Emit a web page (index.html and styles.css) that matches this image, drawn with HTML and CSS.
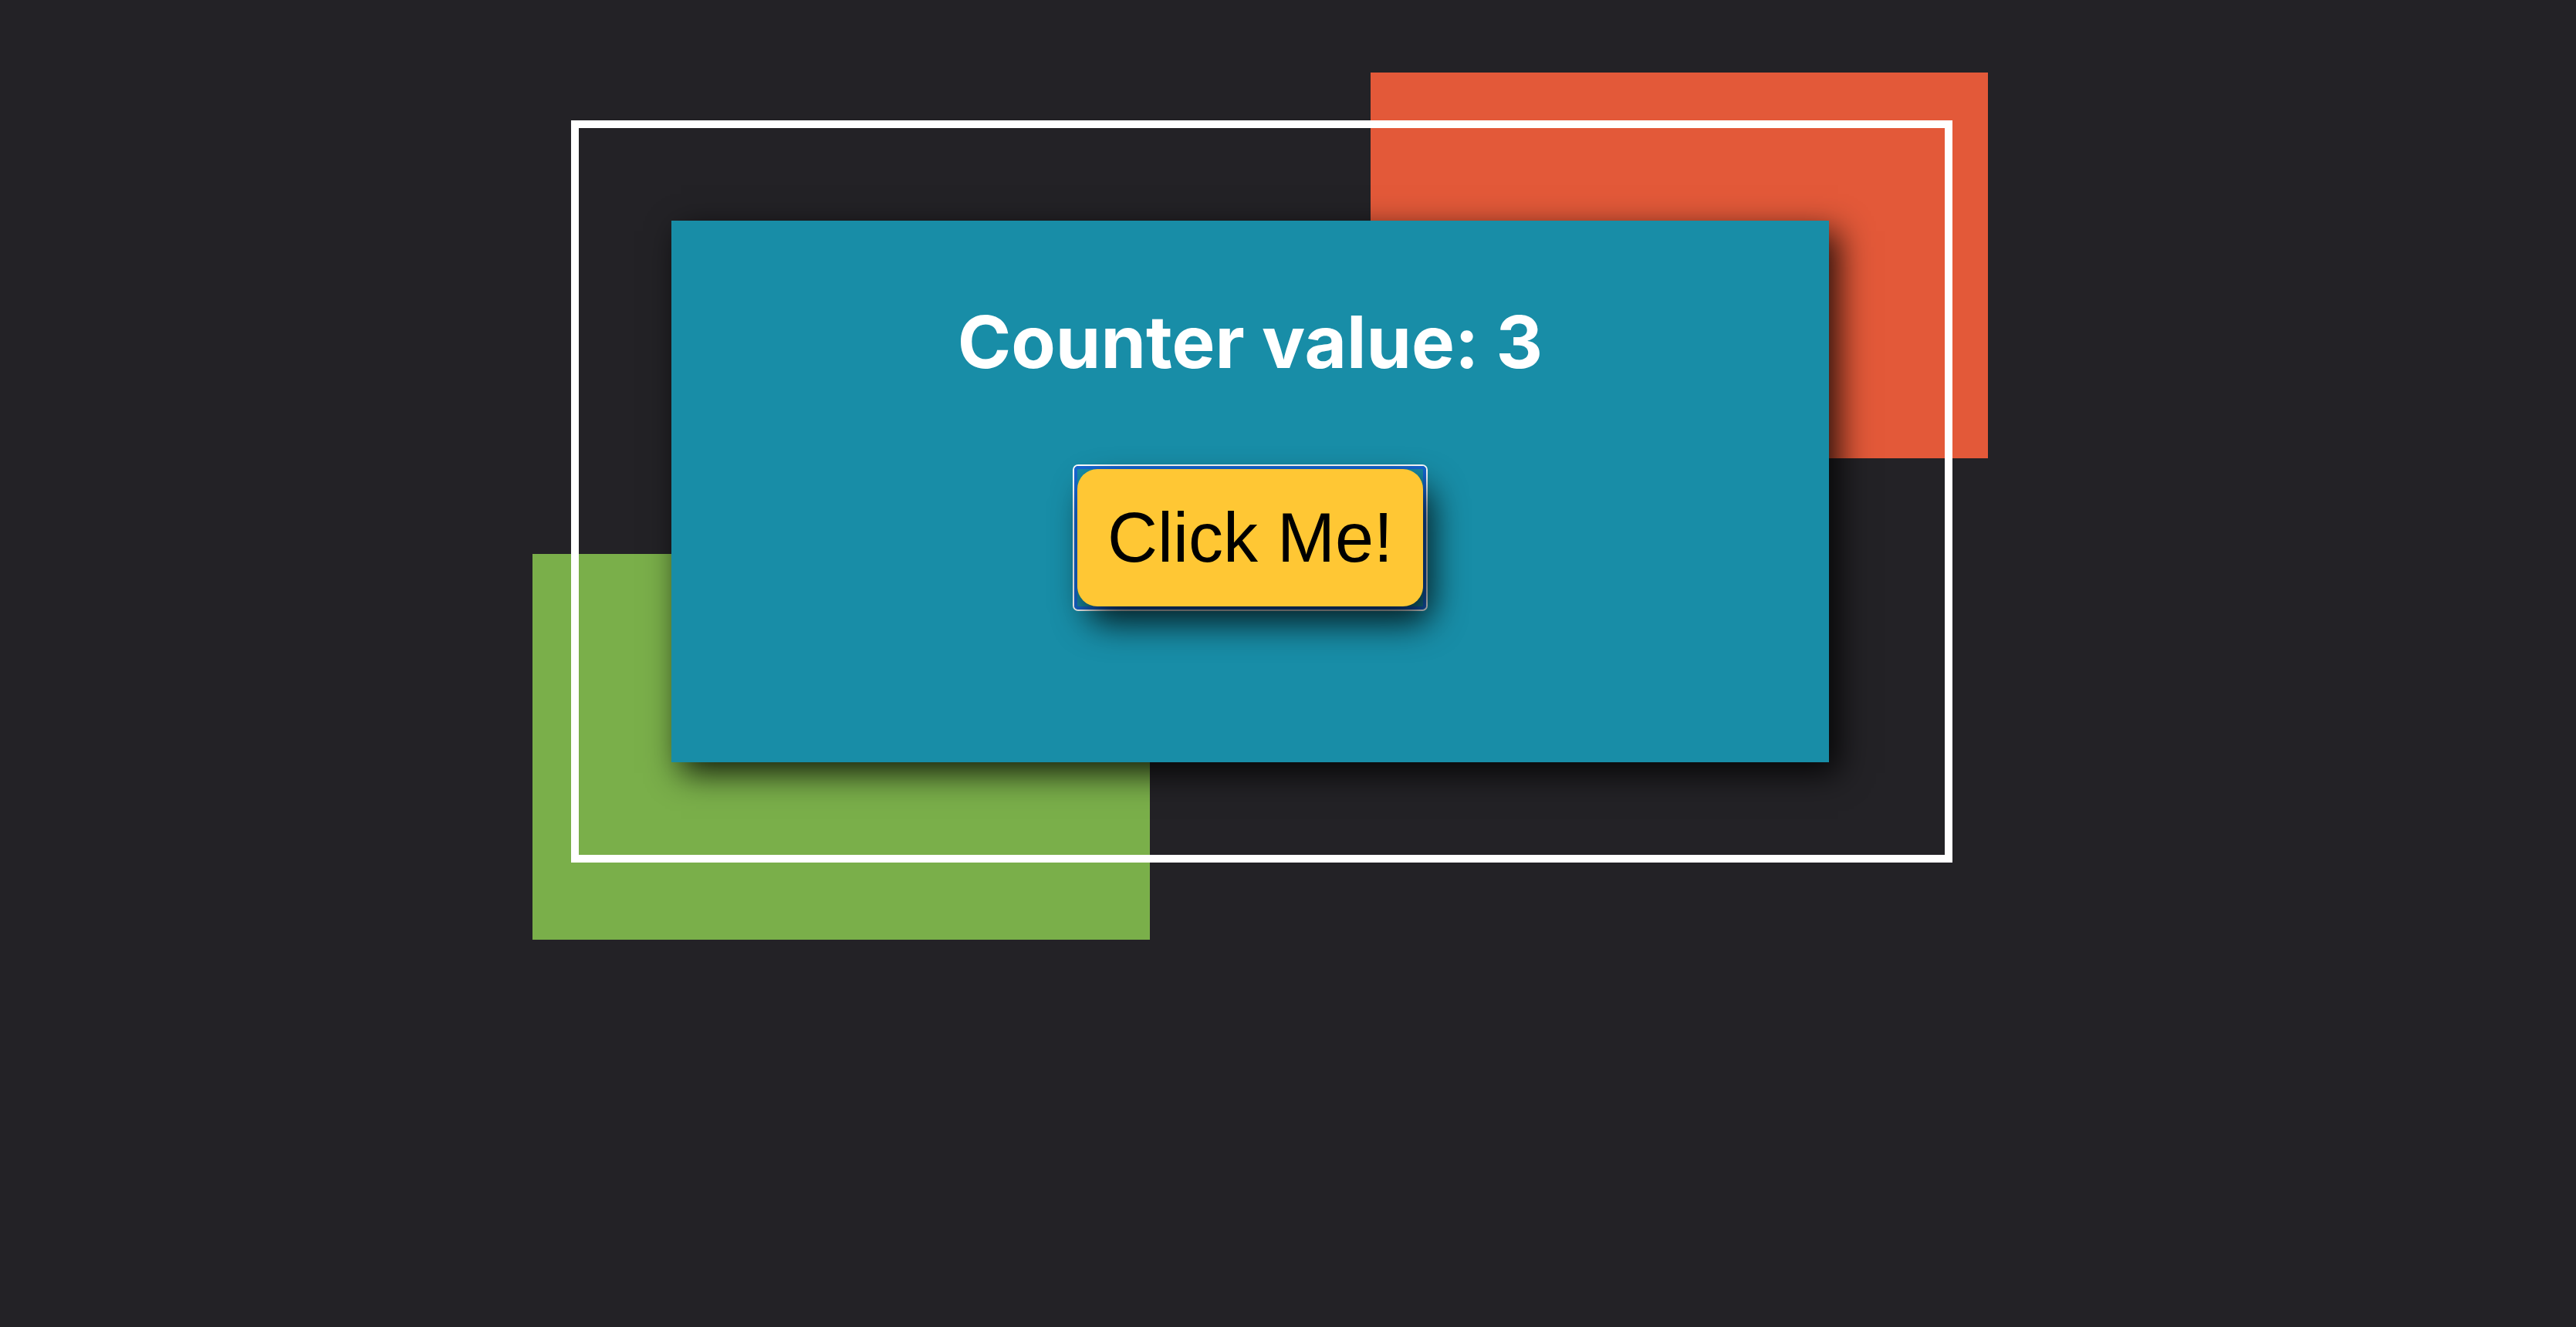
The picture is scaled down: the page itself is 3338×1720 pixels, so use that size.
FILE: index.html
```html
<!DOCTYPE html>
<html lang="en">
<head>
<meta charset="utf-8">
<title>Counter</title>
<link rel="stylesheet" href="styles.css">
</head>
<body>
<div class="stage">
  <div class="shape shape-orange"></div>
  <div class="shape shape-green"></div>
  <div class="frame">
    <div class="card">
      <h1 class="counter-title">Counter value: 3</h1>
      <span class="focus-ring"><button class="click-btn" type="button">Click Me!</button></span>
    </div>
  </div>
</div>
</body>
</html>
```

FILE: styles.css
```css
html, body {
  margin: 0;
  padding: 0;
}

body {
  background: #232226;
  width: 3338px;
  height: 1720px;
  overflow: hidden;
  font-family: "Inter", "Liberation Sans", sans-serif;
}

.stage {
  position: relative;
  padding: 156px 0 0 740px;
}

.shape {
  position: absolute;
  width: 800px;
  height: 500px;
}

.shape-orange {
  left: 1776px;
  top: 94px;
  background: #e35939;
}

.shape-green {
  left: 690px;
  top: 718px;
  background: #7aaf4a;
}

.frame {
  position: relative;
  box-sizing: border-box;
  width: 1790px;
  border: 10px solid #ffffff;
  padding: 120px;
}

.card {
  box-sizing: border-box;
  width: 1500px;
  height: 702px;
  background: #188da7;
  box-shadow: 12px 14px 40px rgba(0, 0, 0, 0.85);
  display: flex;
  flex-direction: column;
  align-items: center;
  padding-top: 105px;
}

.counter-title {
  margin: 0;
  color: #ffffff;
  font-family: "Inter", "Liberation Sans", sans-serif;
  font-weight: 700;
  font-size: 94px;
  line-height: 104px;
}

.focus-ring {
  display: inline-flex;
  margin-top: 109px;
  border: 4px solid #1767d3;
  border-radius: 5px;
  box-shadow: 0 0 0 2px #ffffff;
}

.click-btn {
  display: block;
  margin: 0;
  border: none;
  border-radius: 26px;
  background: #ffc734;
  color: #000000;
  font-family: "Liberation Sans", Arial, sans-serif;
  font-size: 90px;
  line-height: 104px;
  padding: 37px 39px;
  box-shadow: 12px 22px 44px rgba(0, 0, 0, 0.8);
  cursor: pointer;
}
```
